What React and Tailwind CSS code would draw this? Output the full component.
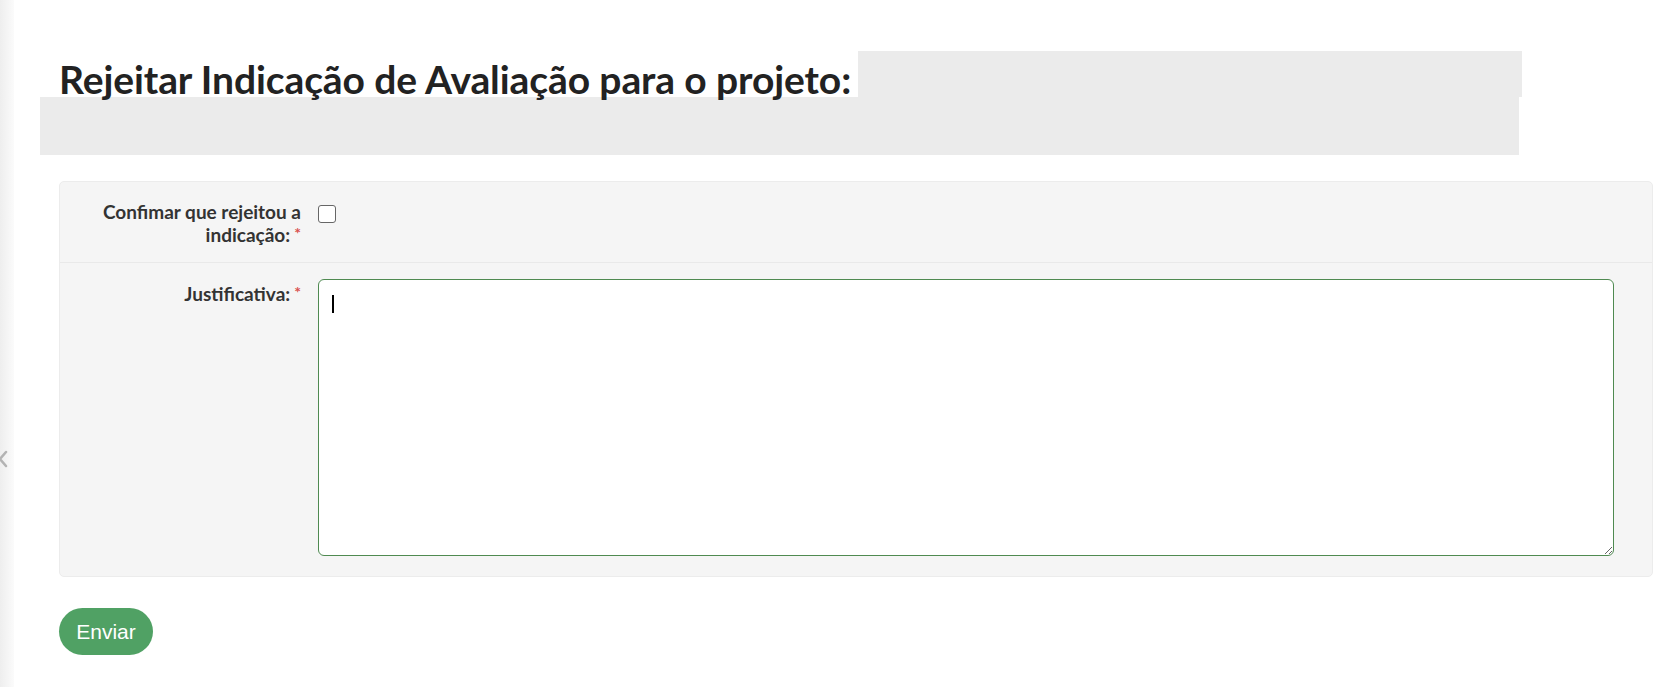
import { useState } from 'react';

function RequiredMark() {
  return <span className="ml-[4px] align-top text-[16px] leading-[20px] text-[#d9534f]">*</span>;
}

export default function App() {
  const [confirmed, setConfirmed] = useState(false);
  const [reason, setReason] = useState('');

  return (
    <div className="flex min-h-[687px] bg-white font-['Lato','Noto_Sans',sans-serif] text-[#333]">
      {/* collapsed sidebar */}
      <aside className="relative w-[14px] shrink-0 bg-gradient-to-r from-[#eeeeee] to-[#fbfbfb]">
        <svg className="absolute left-[-2px] top-[450px]" width="10" height="18" viewBox="0 0 10 18" fill="none">
          <path d="M8 2 L2 9 L8 16" stroke="#b3b3b3" strokeWidth="2.5" strokeLinecap="round" strokeLinejoin="round" />
        </svg>
      </aside>

      <main className="flex-1 pl-[45px] pr-[27px] pt-[51px]">
        {/* heading with redacted project name */}
        <h1 className="flex h-[46px] items-start text-[39px] font-bold leading-[46px] tracking-[-0.1px] text-[#222]">
          <span className="mt-[5px]">Rejeitar Indicação de Avaliação para o projeto:</span>
          <span className="ml-[7px] inline-block h-[46px] w-[664px] bg-[#ebebeb]" />
        </h1>
        <div className="-ml-[19px] h-[58px] w-[1479px] bg-[#ebebeb]" />

        {/* form panel */}
        <div className="mt-[26px] rounded-[5px] border border-[#ececec] bg-[#f5f5f5]">
          <div className="flex pt-[18px] pb-[16px]">
            <label className="w-[258px] shrink-0 pr-[17px] text-right text-[19px] font-bold leading-[23px] text-[#333]">
              Confimar que rejeitou a indicação:<RequiredMark />
            </label>
            <div className="flex-1 pr-[38px] pt-[5px]">
              <input
                type="checkbox"
                checked={confirmed}
                onChange={(e) => setConfirmed(e.target.checked)}
                className="block h-[18px] w-[18px] appearance-none rounded-[3px] border-[1.5px] border-[#666] bg-white checked:bg-[#4fa063]"
              />
            </div>
          </div>

          <div className="flex border-t border-[#e9e9e9] pt-[16px] pb-[20px]">
            <label className="w-[258px] shrink-0 pr-[17px] pt-[3px] text-right text-[19px] font-bold leading-[23px] text-[#333]">
              Justificativa:<RequiredMark />
            </label>
            <div className="relative flex-1 pr-[38px]">
              <textarea
                value={reason}
                onChange={(e) => setReason(e.target.value)}
                className="block h-[277px] w-full resize-y rounded-[6px] border-[1.5px] border-[#4f8a51] bg-white px-[12px] py-[10px] text-[16px] outline-none"
              />
              {/* caret */}
              <span className="pointer-events-none absolute left-[14px] top-[16px] h-[18px] w-[1.5px] bg-black" />
            </div>
          </div>
        </div>

        <button className="mt-[31px] h-[47px] w-[94px] rounded-full bg-[#50a164] font-['Liberation_Sans',Arial,sans-serif] text-[21px] text-white">
          Enviar
        </button>
      </main>
    </div>
  );
}
